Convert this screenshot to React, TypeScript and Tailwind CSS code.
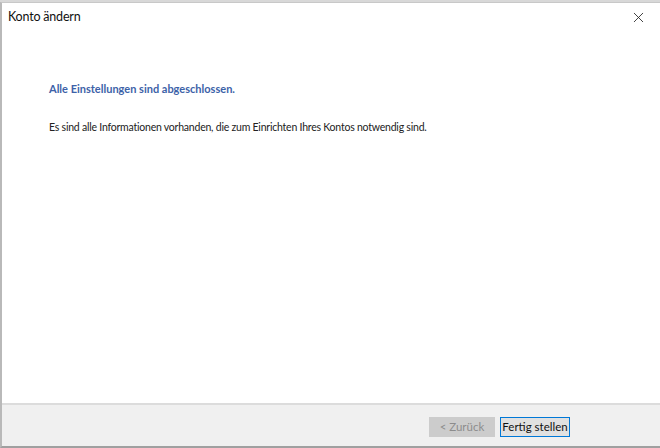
import { X } from 'lucide-react';

export default function App() {
    return (
        <div className="w-[660px] h-[448px] bg-[#d8d8d8] pt-[2px] overflow-hidden" style={{ fontFamily: 'Lato, "Noto Sans", sans-serif' }}>
            <div className="h-[446px] flex flex-col bg-white border-l-2 border-l-[#b9b9b9] border-b-2 border-b-[#a0a0a0] border-t border-t-[#c8c8c8]">
                {/* title bar */}
                <div className="h-[29px] flex items-center justify-between pl-[6px] pr-[13px]">
                    <span className="text-[12.5px] tracking-[-0.2px] text-[#111]">Konto ändern</span>
                    <X className="w-[17px] h-[17px] text-[#222]" strokeWidth={1.2} />
                </div>

                {/* content */}
                <div className="flex-1 pl-[47px] pt-[49px]">
                    <p className="text-[11px] font-bold text-[#3d62a8]">Alle Einstellungen sind abgeschlossen.</p>
                    <p className="text-[10.5px] tracking-[-0.22px] text-[#222] mt-[22px]">
                        Es sind alle Informationen vorhanden, die zum Einrichten Ihres Kontos notwendig sind.
                    </p>
                </div>

                {/* footer */}
                <div className="h-[43px] bg-[#f0f0f0] border-t-2 border-t-[#dcdcdc] flex items-center justify-end gap-[5px] pr-[90px] pt-[2px]">
                    <button className="w-[66px] h-[20px] bg-[#cccccc] text-[#8c8c8c] text-[11.5px] border border-[#cccccc] whitespace-nowrap">
                        &lt; Zurück
                    </button>
                    <button className="w-[70px] h-[20px] bg-[#e1e1e1] text-[#111] text-[11.5px] border border-[#0078d7] whitespace-nowrap">
                        Fertig stellen
                    </button>
                </div>
            </div>
        </div>
    );
}
